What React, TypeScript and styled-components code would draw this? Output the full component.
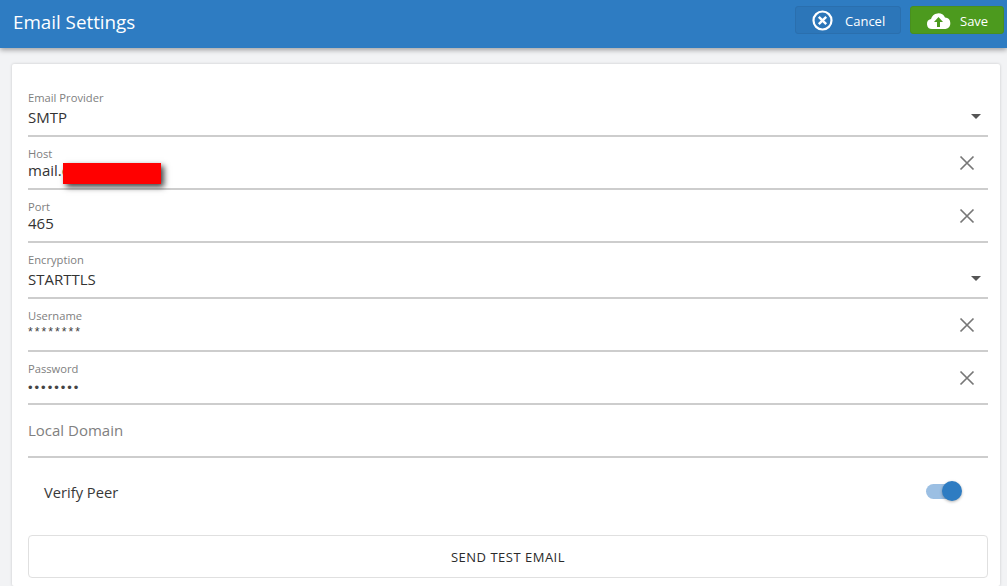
import React from "react";
import styled, { createGlobalStyle } from "styled-components";

const Global = createGlobalStyle`
  html, body { margin: 0; padding: 0; background: #f2f3f5; }
  body { font-family: "Open Sans", "Noto Sans", sans-serif; overflow: hidden; }
  * { box-sizing: border-box; }
`;
const Page = styled.div`width: 1007px; height: 586px; overflow: hidden; display: flex; flex-direction: column; background: #f2f3f5;`;
const Header = styled.header`
  height: 48px; flex: none; background: #2e7cc2; display: flex; align-items: flex-start; justify-content: space-between;
  padding: 6px 3px 0 13px; box-shadow: 0 2px 5px rgba(0,0,0,.35); position: relative; z-index: 1;
`;
const Title = styled.h1`margin: 3px 0 0; font-size: 18.8px; line-height: 26px; font-weight: 400; color: #fff;`;
const Actions = styled.div`display: flex; gap: 9px;`;
const HeadButton = styled.button<{ $save?: boolean }>`
  height: 28px; width: ${p => (p.$save ? "94px" : "106px")}; display: flex; align-items: center; border-radius: 3px;
  padding: 1px 0 0 ${p => (p.$save ? "15px" : "16px")}; gap: ${p => (p.$save ? "9px" : "12px")};
  background: ${p => (p.$save ? "#4c9a1e" : "#2c76b9")};
  border: 1px solid ${p => (p.$save ? "#488f1e" : "#2a6fae")};
  color: #fff; font: 400 13px "Open Sans", sans-serif;
`;
const Card = styled.main`
  margin: 16px 0 0 12px; width: 988px; flex: 1; background: #fff; padding: 16px 12px 0 16px; border-radius: 2px;
  box-shadow: 0 0 3px rgba(0,0,0,.18);
`;
const Field = styled.div<{ $h: number }>`
  height: ${p => p.$h}px; border-bottom: 2px solid #cdcdcd; display: flex; align-items: flex-start; justify-content: space-between; position: relative;
`;
const FieldBody = styled.div<{ $top: number }>`padding-top: ${p => p.$top}px; display: flex; flex-direction: column;`;
const Label = styled.label`font-size: 11.2px; line-height: 14px; color: #808080;`;
const Value = styled.div<{ $gap: number }>`margin-top: ${p => p.$gap}px; font-size: 15px; line-height: 18px; color: #333; position: relative;`;
const Masked = styled.div<{ $gap: number; $size: number }>`
  margin-top: ${p => p.$gap}px; font-size: ${p => p.$size}px; line-height: 14px; color: #444; letter-spacing: 2px; font-family: "Liberation Sans", sans-serif;
`;
const Placeholder = styled.div`margin-top: 15px; font-size: 15px; line-height: 20px; color: #808080;`;
const Redact = styled.span`
  position: absolute; left: 35px; top: 2px; width: 98px; height: 21px; background: #f00; box-shadow: 3px 3px 6px rgba(0,0,0,.75);
`;
const Clear = styled.svg`width: 16px; height: 16px; margin: 18px 13px 0 0; flex: none;`;
const Caret = styled.span<{ $top: number }>`
  width: 0; height: 0; margin: ${p => p.$top}px 7px 0 0; border-left: 5px solid transparent; border-right: 5px solid transparent; border-top: 5px solid #555;
`;
const ToggleRow = styled.div`height: 68px; display: flex; align-items: center; justify-content: space-between; padding: 0 28px 0 16px;`;
const ToggleLabel = styled.span`font-size: 14.7px; color: #383838;`;
const Track = styled.span`width: 34px; height: 15px; border-radius: 8px; background: #9bbfe3; position: relative; display: block; margin-bottom: 1px;`;
const Knob = styled.span`
  position: absolute; right: -2px; top: -3px; width: 20px; height: 20px; border-radius: 50%; background: #2e7cc2; box-shadow: 0 1px 3px rgba(0,0,0,.3);
`;
const TestButton = styled.button`
  width: 100%; margin-top: 9px; height: 43px; background: #fff; border: 1px solid #e0e0e0; border-radius: 4px; color: #2b2b2b;
  font: 500 13px "Open Sans", sans-serif; letter-spacing: .5px; display: block;
`;

const X = () => (
  <Clear viewBox="0 0 16 16" fill="none" stroke="#777" strokeWidth="1.7"><path d="M1.5 1.5l13 13M14.5 1.500l-13 13" /></Clear>
);

export default function App() {
  return (
    <Page>
      <Global />
      <Header>
        <Title>Email Settings</Title>
        <Actions>
          <HeadButton>
            <svg width="21" height="21" viewBox="0 0 21 21" fill="none" stroke="#fff"><circle cx="10.5" cy="10.5" r="9" strokeWidth="2.2" /><path d="M6.8 6.8l7.400 7.400M14.200 6.800l-7.400 7.400" strokeWidth="2.4" /></svg>
            Cancel
          </HeadButton>
          <HeadButton $save>
            <svg width="25" height="18" viewBox="0 0 25 18"><path fill="#fff" d="M6 17a5 5 0 0 1-1-9.900A7.500 7.500 0 0 1 19 5.500 5.800 5.800 0 0 1 19.500 17z" /><path fill="#4c9a1e" d="M12.500 5l4.500 5h-3v5h-3v-5H8z" /></svg>
            Save
          </HeadButton>
        </Actions>
      </Header>
      <Card>
        <Field $h={57}>
          <FieldBody $top={11}><Label>Email Provider</Label><Value $gap={3}>SMTP</Value></FieldBody>
          <Caret $top={34} />
        </Field>
        <Field $h={53}>
          <FieldBody $top={10}><Label>Host</Label><Value $gap={0}>mail.c<Redact /></Value></FieldBody>
          <X />
        </Field>
        <Field $h={53}>
          <FieldBody $top={10}><Label>Port</Label><Value $gap={0}>465</Value></FieldBody>
          <X />
        </Field>
        <Field $h={56}>
          <FieldBody $top={10}><Label>Encryption</Label><Value $gap={3}>STARTTLS</Value></FieldBody>
          <Caret $top={33} />
        </Field>
        <Field $h={53}>
          <FieldBody $top={10}><Label>Username</Label><Masked $gap={2} $size={12.2}>********</Masked></FieldBody>
          <X />
        </Field>
        <Field $h={53}>
          <FieldBody $top={10}><Label>Password</Label><Masked $gap={5} $size={13}>••••••••</Masked></FieldBody>
          <X />
        </Field>
        <Field $h={53}>
          <FieldBody $top={0}><Placeholder>Local Domain</Placeholder></FieldBody>
        </Field>
        <ToggleRow>
          <ToggleLabel>Verify Peer</ToggleLabel>
          <Track><Knob /></Track>
        </ToggleRow>
        <TestButton>SEND TEST EMAIL</TestButton>
      </Card>
    </Page>
  );
}
